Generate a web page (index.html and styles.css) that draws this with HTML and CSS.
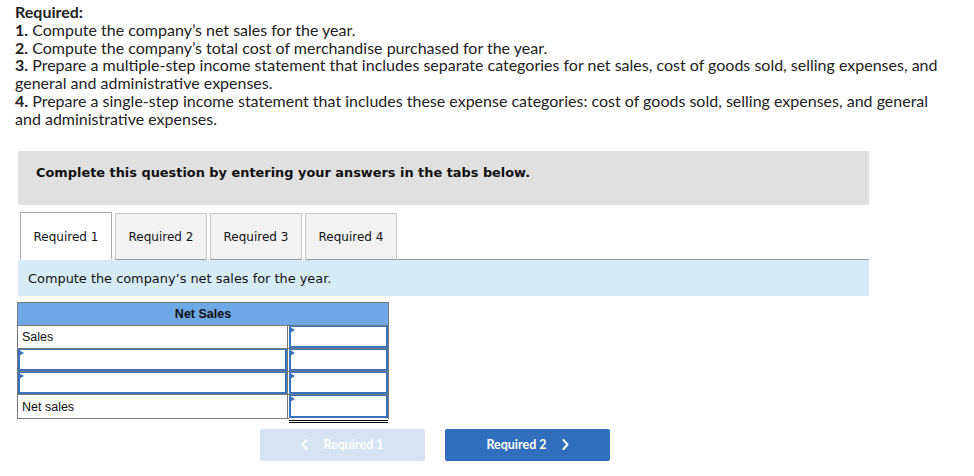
FILE: index.html
```html
<!DOCTYPE html>
<html>
<head>
<meta charset="utf-8">
<link rel="stylesheet" href="styles.css">
</head>
<body>
<div class="page">
  <div class="req">
    <div><b>Required:</b></div>
    <div><b>1.</b> Compute the company’s net sales for the year.</div>
    <div><b>2.</b> Compute the company’s total cost of merchandise purchased for the year.</div>
    <div><b>3.</b> Prepare a multiple-step income statement that includes separate categories for net sales, cost of goods sold, selling expenses, and general and administrative expenses.</div>
    <div><b>4.</b> Prepare a single-step income statement that includes these expense categories: cost of goods sold, selling expenses, and general and administrative expenses.</div>
  </div>

  <div class="prompt">Complete this question by entering your answers in the tabs below.</div>

  <div class="tabs">
    <div class="tab active">Required 1</div>
    <div class="tab">Required 2</div>
    <div class="tab">Required 3</div>
    <div class="tab">Required 4</div>
    <div class="tab-fill"></div>
  </div>
  <div class="panel-head">Compute the company’s net sales for the year.</div>

  <div class="sheet">
    <div class="sheet-title">Net Sales</div>
    <div class="row">
      <div class="lbl">Sales</div>
      <div class="val"><div class="inp"></div></div>
    </div>
    <div class="row">
      <div class="lbl"><div class="inp"></div></div>
      <div class="val"><div class="inp"></div></div>
    </div>
    <div class="row">
      <div class="lbl"><div class="inp"></div></div>
      <div class="val"><div class="inp"></div></div>
    </div>
    <div class="row last">
      <div class="lbl">Net sales</div>
      <div class="val"><div class="inp total"></div></div>
    </div>
  </div>

  <div class="nav">
    <div class="btn prev"><svg class="chev" width="7" height="11" viewBox="0 0 7 11"><path d="M5.5 1 L1.5 5.5 L5.5 10" fill="none" stroke="#fff" stroke-width="2" stroke-linecap="round" stroke-linejoin="round"/></svg><span>Required 1</span></div>
    <div class="btn next"><span>Required 2</span><svg class="chev" width="7" height="11" viewBox="0 0 7 11"><path d="M1.5 1 L5.5 5.5 L1.5 10" fill="none" stroke="#fff" stroke-width="2" stroke-linecap="round" stroke-linejoin="round"/></svg></div>
  </div>
</div>
</body>
</html>
```

FILE: styles.css
```css
html, body {
  margin: 0;
  padding: 0;
  background: #fff;
}
.page {
  padding: 3px 0 0 0;
  width: 974px;
}
.req {
  padding-left: 15px;
  padding-right: 20px;
  font-family: "Lato", "Open Sans", sans-serif;
  font-size: 16px;
  line-height: 17.8px;
  color: #222;
}
.req b {
  font-weight: 700;
}
.prompt {
  margin: 23px 0 0 18px;
  width: 851px;
  height: 54px;
  box-sizing: border-box;
  background: #e0e0e0;
  padding: 0 18px 10px;
  display: flex;
  align-items: center;
  font-family: "DejaVu Sans", Verdana, sans-serif;
  font-weight: 700;
  font-size: 12.9px;
  color: #111;
}
.tabs {
  margin: 7px 0 0 18px;
  width: 851px;
  display: flex;
  align-items: flex-end;
  height: 48px;
}
.tab {
  width: 92px;
  height: 47px;
  box-sizing: border-box;
  margin-left: 3px;
  border: 1px solid #c8c8c8;
  border-bottom: 1px solid #999;
  background: #f2f2f2;
  display: flex;
  align-items: center;
  justify-content: center;
  padding-top: 2px;
  font-family: "DejaVu Sans", Verdana, sans-serif;
  font-size: 12px;
  color: #111;
}
.tab.active {
  margin-left: 2px;
  background: #fff;
  border-color: #aaa;
  border-bottom-color: #fff;
  height: 48px;
}
.tab-fill {
  flex: 1;
  border-bottom: 1px solid #999;
}
.panel-head {
  margin-left: 18px;
  width: 851px;
  height: 36px;
  box-sizing: border-box;
  background: #d6ebf8;
  padding: 2px 0 0 10px;
  display: flex;
  align-items: center;
  font-family: "DejaVu Sans", Verdana, sans-serif;
  font-size: 12.9px;
  color: #111;
}
.sheet {
  margin: 6px 0 0 17px;
  width: 372px;
  border: 1px solid #777;
  box-sizing: border-box;
  font-family: "Liberation Sans", Arial, sans-serif;
  font-size: 12.5px;
  color: #111;
}
.sheet-title {
  height: 22px;
  background: #6ea8e6;
  border-bottom: 1px solid #777;
  display: flex;
  align-items: center;
  justify-content: center;
  font-weight: 700;
}
.row {
  display: grid;
  grid-template-columns: 270px 100px;
  height: 23px;
}
.lbl {
  border-right: 1px solid #777;
  border-bottom: 1px solid #777;
  display: flex;
  align-items: center;
  padding: 1px 0 0 4px;
  box-sizing: border-box;
}
.row .lbl:has(.inp) {
  padding: 0;
}
.val {
  border-bottom: 1px solid #777;
  box-sizing: border-box;
  display: flex;
}
.row.last .lbl, .row.last .val {
  border-bottom: none;
}
.inp {
  position: relative;
  flex: 1;
  align-self: stretch;
  border: 2px solid #3b74bd;
  border-top-width: 1px;
  background: #fff;
}
.lbl .inp {
  margin: 0;
}
.val .inp {
  margin: 0 0 0 1px;
}
.inp::before {
  content: "";
  position: absolute;
  left: -1px;
  top: 0;
  border-left: 5px solid #3b74bd;
  border-top: 3px solid transparent;
  border-bottom: 3px solid transparent;
}
.inp.total {
  border-bottom: 2px solid #3b74bd;
  box-shadow: 0 2px 0 #fff, 0 3px 0 #000, 0 4px 0 #fff, 0 5px 0 #000;
}
.nav {
  display: flex;
  gap: 20px;
  margin: 10px 0 0 260px;
}
.btn {
  width: 165px;
  height: 32px;
  box-sizing: border-box;
  border-radius: 2px;
  display: flex;
  align-items: center;
  justify-content: center;
  gap: 15px;
  font-family: "Lato", "Open Sans", sans-serif;
  font-weight: 700;
  font-size: 12.5px;
  color: #fff;
}
.btn .chev {
  display: block;
}
.btn.prev {
  background: #d6e3f3;
}
.btn.next {
  background: #2f6fbd;
}
```
